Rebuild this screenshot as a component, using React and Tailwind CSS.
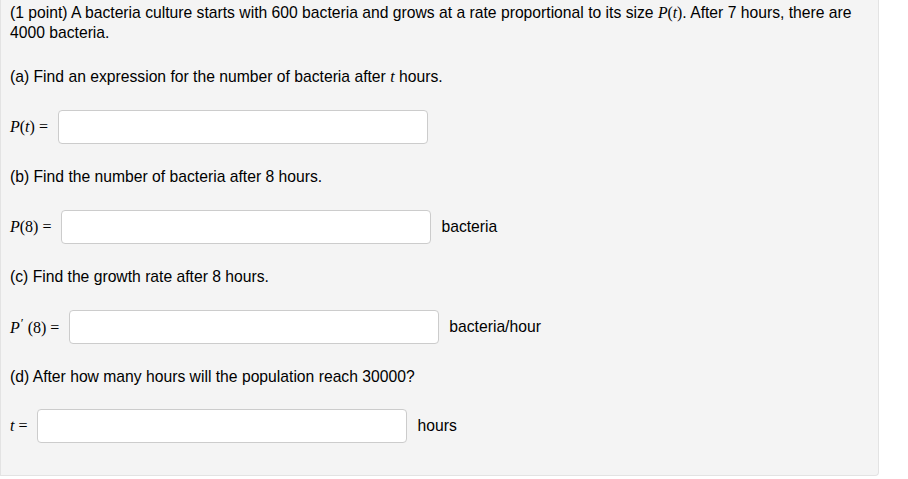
import React from "react";

function M({ children }) {
  return <span className="font-['Liberation_Serif',serif] italic text-[16px]">{children}</span>;
}

function Row({ label, unit, className = "" }) {
  return (
    <div className={"flex items-center gap-[10px] h-[34px] " + className}>
      <span className="font-['Liberation_Serif',serif] text-[16px] text-black whitespace-nowrap">{label}</span>
      <div className="w-[370px] h-[34px] bg-white border border-[#cccccc] rounded-[4px]" />
      {unit && <span className="text-[15.7px]">{unit}</span>}
    </div>
  );
}

export default function App() {
  return (
    <div className="w-[908px] h-[479px] bg-white font-['Liberation_Sans',Arial,sans-serif] text-black text-[15.7px] leading-[20px]">
      <div className="flex flex-col w-[879px] h-[476px] bg-[#f4f4f4] border-r border-b border-l border-[#e3e3e3] rounded-br-[4px] pl-[9px] pt-[3px]">
        <p>
          (1 point) A bacteria culture starts with 600 bacteria and grows at a rate proportional to its size{" "}
          <span className="font-['Liberation_Serif',serif]"><i>P</i>(<i>t</i>)</span>. After 7 hours, there are 4000 bacteria.
        </p>
        <p className="mt-[24px]">
          (a) Find an expression for the number of bacteria after <M>t</M> hours.
        </p>
        <Row className="mt-[23px]" label={<><i>P</i>(<i>t</i>) =</>} />
        <p className="mt-[23px]">(b) Find the number of bacteria after 8 hours.</p>
        <Row className="mt-[23px]" label={<><i>P</i>(8) =</>} unit="bacteria" />
        <p className="mt-[23px]">(c) Find the growth rate after 8 hours.</p>
        <Row
          className="mt-[23px]"
          label={<><i>P</i><span className="align-super text-[13px] leading-none ml-[1px]">′</span>&nbsp;(8) =</>}
          unit="bacteria/hour"
        />
        <p className="mt-[23px]">(d) After how many hours will the population reach 30000?</p>
        <Row className="mt-[22px]" label={<><i>t</i> =</>} unit="hours" />
      </div>
    </div>
  );
}
